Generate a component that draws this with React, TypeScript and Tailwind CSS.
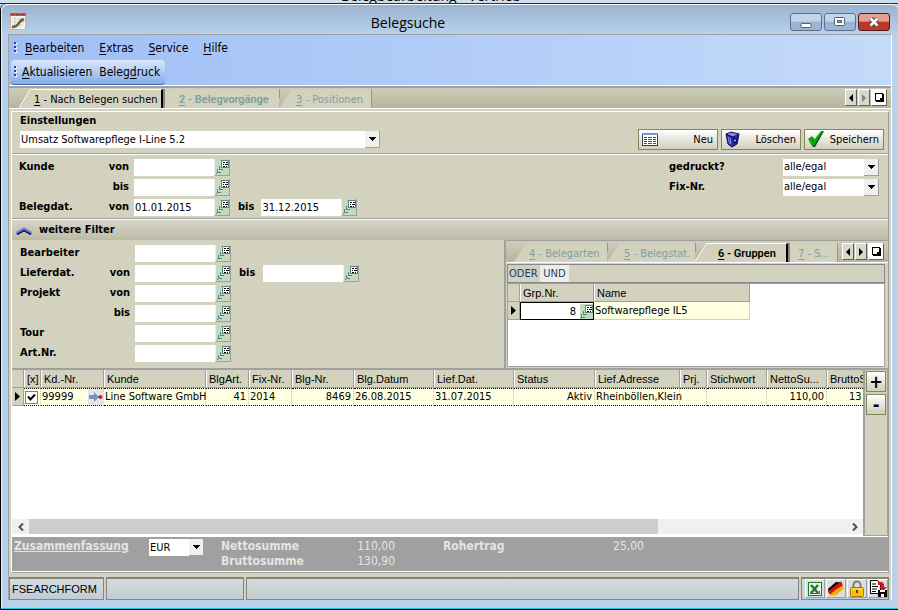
import { useState, type ReactNode } from 'react';
import clsx from 'clsx';

const HEADINGS = [
  { title: '', col: 'w-[12px]' },
  { title: '[x]', col: 'w-[17px]' },
  { title: 'Kd.-Nr.', col: 'w-[63px]' },
  { title: 'Kunde', col: 'w-[102px]' },
  { title: 'BlgArt.', col: 'w-[43px]' },
  { title: 'Fix-Nr.', col: 'w-[43px]' },
  { title: 'Blg-Nr.', col: 'w-[62px]' },
  { title: 'Blg.Datum', col: 'w-[80px]' },
  { title: 'Lief.Dat.', col: 'w-[80px]' },
  { title: 'Status', col: 'w-[81px]' },
  { title: 'Lief.Adresse', col: 'w-[85px]' },
  { title: 'Prj.', col: 'w-[27px]' },
  { title: 'Stichwort', col: 'w-[60px]' },
  { title: 'NettoSu...', col: 'w-[60px]' },
  { title: 'BruttoS', col: 'w-[80px]' },
];

function Hotkey({ children }: { children: string }) {
  return (
    <>
      <span className="underline underline-offset-2">{children[0]}</span>
      {children.slice(1)}
    </>
  );
}

function Grip() {
  return (
    <svg width="4" height="14" className="shrink-0" aria-hidden="true">
      {[1, 5, 9].map(y => (
        <g key={y}>
          <rect x="1" y={y + 1} width="2" height="2" fill="#fff" />
          <rect x="0" y={y} width="2" height="2" fill="#27418f" />
        </g>
      ))}
    </svg>
  );
}

function LookupButton({ label, small }: { label: string; small?: boolean }) {
  return (
    <button
      type="button"
      aria-label={label}
      className={clsx(
        'flex shrink-0 items-center justify-center overflow-hidden bg-[#c0dcc0]',
        small ? 'h-[15px] w-[13px]' : 'h-[17px] w-4 border-r border-b border-l border-r-[#a0a0a0] border-b-[#a0a0a0] border-l-[#eee]'
      )}
    >
      <svg width="13" height="15" className="shrink-0" shapeRendering="crispEdges" aria-hidden="true">
        <rect x="5" y="1" width="8" height="8" fill="#fff" />
        <path d="M5 1h8v1h-8zM5 1h1v8h-1zM5 8h8v1h-8zM12 1h1v8h-1z" fill="#5f8080" />
        <path d="M7 3h2v1h-2zM10 3h2v1h-2zM7 5h1v1h-1zM9 5h3v1h-3zM7 7h2v1h-2zM10 7h1v1h-1z" />
        <path d="M3 7h1v3h3v1h-4zM1 10h1v3h3v1h-4zM0 14h1v1h-1z" fill="#5f8080" />
      </svg>
    </button>
  );
}

function LookupField({ label, value = '' }: { label: string; value?: string }) {
  return (
    <div className="flex">
      <input aria-label={label} defaultValue={value} className="h-[17px] w-20 bg-white px-px outline-none" />
      <LookupButton label={`${label} auswählen`} />
    </div>
  );
}

function DropDown({ label, value, className }: { label: string; value: string; className: string }) {
  return (
    <div className={clsx('relative h-[17px] bg-white text-black', className)}>
      <select aria-label={label} className="h-full w-full appearance-none bg-transparent px-px outline-none">
        <option>{value}</option>
      </select>
      <span className="pointer-events-none absolute top-0 right-0 flex h-full w-[15px] items-center justify-center border-r border-b border-[#a0a0a0] bg-[#f0f0f0]">
        <svg width="7" height="4" shapeRendering="crispEdges" aria-hidden="true">
          <path d="M0 0h7v1h-1v1h-1v1h-1v1h-1v-1h-1v-1h-1v-1h-1z" />
        </svg>
      </span>
    </div>
  );
}

function FilterRow({ title, prefix = '', children }: { title: string; prefix?: string; children: ReactNode }) {
  return (
    <div className="flex h-5 items-center">
      <span className="w-[78px] font-bold">{title}</span>
      <span className="w-8 text-right font-bold">{prefix}</span>
      <div className="ml-[5px] flex items-center">{children}</div>
    </div>
  );
}

// slanted left edge of a tab
function Slant({ active }: { active?: boolean }) {
  return (
    <svg width="13" height="19" className="shrink-0" aria-hidden="true">
      <path d="M0 19L13 0V19z" fill="#d2d2bf" />
      {active && <path d="M0 18.500L11.500 .5H13" fill="none" stroke="#fff" />}
    </svg>
  );
}

function Notch() {
  return <span className="-mr-px h-[9px] w-px shrink-0 self-start bg-[#7f9f9f]" />;
}

function Tab({ children, className }: { children: ReactNode; className: string }) {
  return (
    <button type="button" className={clsx('h-[19px] shrink-0 bg-[#d2d2bf] pt-0.5 text-left whitespace-nowrap', className)}>
      {children}
    </button>
  );
}

function TabScroller({ rightDisabled }: { rightDisabled?: boolean }) {
  const box = 'flex h-[17px] items-center justify-center border border-t-white border-l-white border-r-[#606060] border-b-[#606060]';
  return (
    <div className="ml-auto flex shrink-0 gap-px self-start">
      <button type="button" aria-label="Zurück" className={clsx(box, 'w-[12px] bg-[#d8d8cc]')}>
        <svg width="4" height="8"><path d="M4 0v8L0 4z" /></svg>
      </button>
      <button type="button" aria-label="Weiter" className={clsx(box, 'w-[12px] bg-[#d8d8cc]')}>
        <svg width="4" height="8"><path d="M0 0v8L4 4z" fill={rightDisabled ? '#808080' : '#000'} /></svg>
      </button>
      <button type="button" aria-label="Liste" className={clsx(box, 'w-4 bg-white')}>
        <svg width="9" height="9" shapeRendering="crispEdges">
          <path d="M0 0h8v8h-8z" />
          <path d="M1 1h6v6h-6z" fill="#fff" />
          <path d="M8 1h1v8h-8v-1h7zM5 5h2v2h-2z" />
        </svg>
      </button>
    </div>
  );
}

function ActionButton({ children, icon }: { children: ReactNode; icon: ReactNode }) {
  return (
    <button
      type="button"
      className="flex h-[21px] w-20 items-center justify-between border border-[#85855a] bg-linear-to-b from-white to-[#cfcfbc] pr-1 pl-[3px]"
    >
      {icon}
      {children}
    </button>
  );
}

function HeadCell({ children, first }: { children?: ReactNode; first?: boolean }) {
  return (
    <th
      scope="col"
      className={clsx(
        'h-[18px] overflow-hidden border-r border-b border-[#a0a0a0] bg-[#d2d2bf] pl-0.5 text-left font-["Liberation_Sans",sans-serif] text-[11px] leading-4 font-normal whitespace-nowrap',
        !first && 'border-l border-l-white'
      )}
    >
      {children}
    </th>
  );
}

function Cell({ children, right }: { children?: ReactNode; right?: boolean }) {
  return (
    <td
      className={clsx(
        'h-[18px] border-y border-r border-dotted border-y-black border-r-[#c0c0b0] bg-[#ffffe1] py-0 pl-px leading-4 whitespace-nowrap',
        right ? 'pr-0.5 text-right' : 'pr-0'
      )}
    >
      {children}
    </td>
  );
}

function RowMarker() {
  return (
    <td className="h-[18px] border-r border-b border-[#a0a0a0] bg-[#d2d2bf] pl-[3px]">
      <svg width="6" height="9" className="block"><path d="M0 0v9L5 4.500z" /></svg>
    </td>
  );
}

function TitleBar() {
  const btn = 'flex h-[18px] w-8 items-center justify-center rounded-[3px] border';
  const blue = 'border-[#586f8e] bg-linear-to-b from-[#c3d5ea] from-45% to-[#9cb5d2] to-50%';
  return (
    <header className="flex h-[30px] items-start rounded-t-md border-t border-white bg-linear-to-b from-[#9ab3cf] to-[#b9d1ea] pr-2 pl-2">
      <svg width="16" height="17" className="mt-2" aria-hidden="true">
        <rect x=".5" y="2.500" width="15" height="14" fill="#f7f5ee" stroke="#c9b8a8" />
        <path d="M0 0h16v3H0z" fill="#d8503a" />
        <path d="M2 1.500h2M6 1.500h3M11 1.500h3" stroke="#8f2d20" />
        <path d="M2 6h12M2 9h12M2 12h12M5 4v11M10 4v11" stroke="#d5d0c0" />
        <path d="M2 14c4 0 5-1 7-4s3-3 5-4" fill="none" stroke="#5e5c45" strokeWidth="2.500" />
        <path d="M4 15c4-1 5-3 6-5l4-2" fill="none" stroke="#c9a85a" />
      </svg>
      <h1 className="flex-1 pt-1 text-center font-['Open_Sans',sans-serif] text-sm leading-7 text-black">Belegsuche</h1>
      <div className="mt-2 flex gap-0.5">
        <button type="button" aria-label="Minimieren" className={clsx(btn, blue)}>
          <svg width="12" height="12"><rect x="1" y="7.500" width="10" height="4" rx="1" fill="#fff" stroke="#53606f" /></svg>
        </button>
        <button type="button" aria-label="Maximieren" className={clsx(btn, blue)}>
          <svg width="12" height="10">
            <rect x=".5" y=".5" width="10" height="8" rx="1" fill="#fff" stroke="#53606f" />
            <rect x="3.500" y="3.500" width="4" height="2" fill="#8fb0d4" stroke="#53606f" />
          </svg>
        </button>
        <button
          type="button"
          aria-label="Schließen"
          className={clsx(btn, 'border-[#4f1822] bg-linear-to-b from-[#e5a092] from-45% to-[#b93a26] to-50%')}
        >
          <svg width="12" height="10">
            <path d="M2.500 1.500l7 7M9.500 1.500l-7 7" stroke="#5b4048" strokeWidth="4.500" />
            <path d="M2.500 1.500l7 7M9.500 1.500l-7 7" stroke="#fff" strokeWidth="2.500" />
          </svg>
        </button>
      </div>
    </header>
  );
}

function GroupPanel() {
  return (
    <div className="flex min-w-0 flex-1 flex-col border-t border-l-2 border-[#a0a0a0]">
      <div className="flex h-[22px] items-end border-b border-white bg-linear-to-b from-[#cdcdba] to-[#b6b69c] pt-0.5 pr-1 pl-2 text-[#7f9f9f]">
        <Slant />
        <Tab className="w-[80px] pl-0.5"><Hotkey>4 - Belegarten</Hotkey></Tab>
        <Notch />
        <Slant />
        <Tab className="w-[75px] pl-1"><Hotkey>5 - Belegstat.</Hotkey></Tab>
        <Notch />
        <Slant active />
        <Tab className="w-[80px] border-t border-r-2 border-t-white border-r-black pl-2.5 font-['Roboto',sans-serif] font-semibold text-black"><Hotkey>6 - Gruppen</Hotkey></Tab>
        <Tab className="w-[50px] border-l-2 border-r border-l-[#85858a] border-r-[#7f9f9f] pl-2"><Hotkey>7 - S...</Hotkey></Tab>
        <TabScroller />
      </div>
      <div className="flex flex-1 flex-col bg-[#d2d2bf] p-px pr-[3px]">
        <div className="flex h-[19px] items-center border border-[#85858a] pl-px text-[#1a3a6c]">
          <button type="button" className="w-[31px] text-left">ODER</button>
          <button type="button" className="h-full w-[29px] bg-[#eeeee6]">UND</button>
        </div>
        <div className="flex-1 border border-[#a0a0a0] bg-white">
          <table className="w-[242px] table-fixed border-separate border-spacing-0">
            <colgroup>
              <col className="w-[12px]" />
              <col className="w-[74px]" />
              <col />
            </colgroup>
            <thead>
              <tr>
                <HeadCell first />
                <HeadCell>Grp.Nr.</HeadCell>
                <HeadCell>Name</HeadCell>
              </tr>
            </thead>
            <tbody>
              <tr>
                <RowMarker />
                <td className="h-[18px] border border-black bg-white p-0">
                  <div className="flex">
                    <input aria-label="Grp.Nr." defaultValue="8" className="h-[15px] w-0 flex-1 pr-1 text-right outline-none" />
                    <LookupButton label="Gruppe auswählen" small />
                  </div>
                </td>
                <td className="h-[18px] border-r border-b border-[#d2d2bf] bg-[#ffffe1] py-0 pl-px leading-4">Softwarepflege IL5</td>
              </tr>
            </tbody>
          </table>
        </div>
      </div>
    </div>
  );
}

function DocumentGrid() {
  const [checked, setChecked] = useState(true);
  return (
    <div className="flex min-h-[165px] flex-1 border-t-2 border-[#a0a0a0]">
      <div className="flex w-0 flex-1 flex-col bg-white">
        <div className="flex-1 overflow-hidden">
          <table className="w-[895px] table-fixed border-separate border-spacing-0">
            <colgroup>
              {HEADINGS.map(h => <col key={h.title} className={h.col} />)}
            </colgroup>
            <thead>
              <tr>
                {HEADINGS.map((h, i) => <HeadCell key={h.title} first={i === 0}>{h.title}</HeadCell>)}
              </tr>
            </thead>
            <tbody>
              <tr>
                <RowMarker />
                <Cell>
                  <label className="relative block h-[13px] w-[13px] bg-white">
                    <input
                      type="checkbox"
                      aria-label="Beleg markieren"
                      checked={checked}
                      onChange={e => setChecked(e.target.checked)}
                      className="block h-[13px] w-[13px] appearance-none border border-[#808080]"
                    />
                    {checked && (
                      <svg width="13" height="13" className="pointer-events-none absolute inset-0">
                        <path d="M3 5.500l2.500 3L10 3.500" fill="none" stroke="#000" strokeWidth="2" />
                      </svg>
                    )}
                  </label>
                </Cell>
                <Cell>
                  <div className="flex items-center justify-between">
                    99999
                    <button type="button" aria-label="Kunde öffnen" className="flex h-4 w-[15px] items-center bg-[#e4e4e8]">
                      <svg width="15" height="10">
                        <path d="M1 3h5V0l5 5-5 5V7H1z" fill="#7396bd" />
                        <path d="M10 5h2" stroke="#333" />
                        <circle cx="12.500" cy="5" r="2" fill="#c8281e" />
                      </svg>
                    </button>
                  </div>
                </Cell>
                <Cell>Line Software GmbH</Cell>
                <Cell right>41</Cell>
                <Cell>2014</Cell>
                <Cell right>8469</Cell>
                <Cell>26.08.2015</Cell>
                <Cell>31.07.2015</Cell>
                <Cell right>Aktiv</Cell>
                <Cell>Rheinböllen,Klein</Cell>
                <Cell />
                <Cell />
                <Cell right>110,00</Cell>
                <Cell><span className="pl-[21px]">13</span></Cell>
              </tr>
            </tbody>
          </table>
        </div>
        <div className="mb-0.5 flex h-[15px] bg-[#f0f0f0]">
          <button type="button" aria-label="Nach links" className="flex w-[17px] items-center justify-center">
            <svg width="6" height="8"><path d="M5 .5L1.500 4 5 7.500" fill="none" stroke="#505050" strokeWidth="2" /></svg>
          </button>
          <div className="flex-1"><div className="h-full w-[77%] bg-[#cdcdcd]" /></div>
          <button type="button" aria-label="Nach rechts" className="flex w-[17px] items-center justify-center">
            <svg width="6" height="8"><path d="M1 .5L4.500 4 1 7.500" fill="none" stroke="#505050" strokeWidth="2" /></svg>
          </button>
        </div>
      </div>
      <div className="flex w-[25px] flex-col gap-0.5 border-r border-b border-l-2 border-[#a0a0a0] bg-[#d2d2bf] p-px">
        <button type="button" className="h-[21px] border border-[#85855a] bg-linear-to-b from-white to-[#cfcfbc] text-lg leading-4 font-bold">+</button>
        <button type="button" className="h-[21px] border border-[#85855a] bg-linear-to-b from-white to-[#cfcfbc] text-lg leading-4 font-bold">-</button>
      </div>
    </div>
  );
}

function StatusBar() {
  const panel = 'h-[23px] border border-t-2 border-[#85857c] bg-linear-to-b from-[#d3dde0] to-[#c3ccd0]';
  const icon = 'flex h-[19px] w-5 items-center justify-center border border-t-white border-l-white border-r-[#a0a0a0] border-b-[#a0a0a0] bg-[#d8dfe2]';
  return (
    <footer className="flex gap-0.5 bg-[#d2d2bf] pr-0.5">
      <div className={clsx(panel, 'w-[95px] pl-0.5 font-["Liberation_Sans",sans-serif] leading-5')}>FSEARCHFORM</div>
      <div className={clsx(panel, 'w-[138px]')} />
      <div className={clsx(panel, 'flex-1')} />
      <div className={clsx(panel, 'flex w-[88px] gap-px pl-[3px]')}>
        <button type="button" aria-label="Excel-Export" className={icon}>
          <svg width="14" height="14">
            <rect x=".5" y=".5" width="13" height="13" fill="#e9f5e9" stroke="#178017" />
            <path d="M3 3l7 8M10 3l-7 8" stroke="#2f6f3f" strokeWidth="2.500" />
            <path d="M2 11.500h10M11.500 9v3" stroke="#178017" />
          </svg>
        </button>
        <button type="button" aria-label="Sprache" className={icon}>
          <svg width="16" height="16" className="shrink-0">
            <path d="M0 8L8 1l5 .5L1 12z" fill="#000" />
            <path d="M0 10.500L8 4l5.500-3.500L15 5 8 9l-6 5z" fill="#e01010" />
            <path d="M2 13.500L9 8l6-3.500 1 3L8 14l-5 1z" fill="#f0b000" />
          </svg>
        </button>
        <button type="button" aria-label="Sperren" className={icon}>
          <svg width="14" height="17">
            <path d="M3.500 8V5a3.500 3.500 0 0 1 7 0v3" fill="none" stroke="#808060" strokeWidth="2" />
            <rect x=".5" y="7.500" width="13" height="9" rx="1" fill="#f8c010" stroke="#a87800" />
            <path d="M1 9h12" stroke="#ffe37a" />
            <path d="M7 10v3" stroke="#5f4300" strokeWidth="2" />
          </svg>
        </button>
        <button type="button" aria-label="Speichern und schließen" className={icon}>
          <svg width="17" height="17">
            <path d="M.5.500h7l3 3v10h-10z" fill="#fff" stroke="#000" />
            <path d="M2 4h4M2 6.500h6M2 9h5M2 11.500h4" stroke="#000" />
            <path d="M8 2h4l2 2v3h3l-4 4-4-4h2V5H8z" fill="#e81010" />
            <rect x="8" y="10" width="9" height="7" fill="#000" />
            <path d="M10 10h5v2h-5zM11 14h3v3h-3z" fill="#fff" />
          </svg>
        </button>
      </div>
    </footer>
  );
}

export default function App() {
  return (
    <div className="flex min-h-screen flex-col bg-[#b9d1ea] font-['DejaVu_Sans_Condensed','Noto_Sans',sans-serif] text-[11px] leading-[14px] text-black">
      {/* lower edge of the parent window's caption */}
      <div className="flex h-1 items-end justify-center overflow-hidden border-b border-[#2a3440] bg-[#cfdeee] pr-9 font-['Open_Sans',sans-serif] text-sm leading-[14px]">
        <span>Belegbearbeitung - Vertrieb</span>
      </div>

      <div className="flex flex-1 flex-col rounded-t-md border-b border-l border-black">
        <div className="flex flex-1 flex-col rounded-t-md border-b border-l border-b-[#20c8e8] border-l-[#e8f2fc]">
          <TitleBar />

          <main className="mr-[6px] mb-2 ml-[6px] flex flex-1 flex-col border-t border-r border-l border-t-[#a0a0a0] border-r-white border-l-[#a0a0a0] bg-[#d2d2bf]">
            <div className="border-b border-white bg-linear-to-r from-[#9ebef5] to-[#c4daf9] text-xs">
              <nav className="flex h-[25px] items-center gap-[15px] pl-[5px]">
                <div className="flex items-center gap-[7px]">
                  <Grip />
                  <button type="button"><Hotkey>Bearbeiten</Hotkey></button>
                </div>
                <button type="button"><Hotkey>Extras</Hotkey></button>
                <button type="button"><Hotkey>Service</Hotkey></button>
                <button type="button"><Hotkey>Hilfe</Hotkey></button>
              </nav>
              <div className="ml-0.5 flex h-[25px] w-[154px] items-center gap-[7px] rounded border-b border-[#3f66ad] bg-linear-to-b from-[#dbe8fc] to-[#86abe6] pl-[3px]">
                <div className="flex items-center gap-1">
                  <Grip />
                  <button type="button"><Hotkey>Aktualisieren</Hotkey></button>
                </div>
                <button type="button">Beleg<span className="underline underline-offset-2">d</span>ruck</button>
              </div>
            </div>

            <div className="flex h-[23px] items-end border-t-2 border-b border-t-[#a0a0a0] border-b-white bg-linear-to-b from-[#cdcdba] to-[#b6b69c] pt-px pr-1 pl-[10px] text-[#7f9f9f]">
              <Slant active />
              <Tab className="w-[131px] border-t border-r-2 border-t-white border-r-black pl-0.5 text-black"><Hotkey>1 - Nach Belegen suchen</Hotkey></Tab>
              <Tab className="w-[116px] border-l-2 border-l-[#85858a] pl-3.5 font-['Roboto',sans-serif] font-semibold"><Hotkey>2 - Belegvorgänge</Hotkey></Tab>
              <Notch />
              <Slant />
              <Tab className="w-[80px] border-r border-r-[#7f9f9f] pl-1"><Hotkey>3 - Positionen</Hotkey></Tab>
              <TabScroller rightDisabled />
            </div>

            <div className="mx-0.5 mt-0.5 mb-1 flex flex-1 flex-col border border-t-white border-l-white border-r-[#a0a0a0] border-b-[#a0a0a0]">
              <section className="flex h-[42px] items-end justify-between border-b border-[#a0a0a0] pr-1 pb-[3px] pl-2">
                <div className="pb-0.5">
                  <h2 className="mb-[3px] font-bold">Einstellungen</h2>
                  <DropDown label="Einstellungen" value="Umsatz Softwarepflege I-Line 5.2" className="w-[360px]" />
                </div>
                <div className="flex gap-[3px]">
                  <ActionButton
                    icon={
                      <svg width="16" height="14" shapeRendering="crispEdges">
                        <path d="M0 0h16v13h-16z" fill="#404040" />
                        <path d="M1 2h14v10h-14z" fill="#fff" />
                        <path d="M0 0h16v2h-16z" fill="#5f9fcf" />
                        <path d="M2 4h3v1h-3zM6 4h4v1h-4zM11 4h3v1h-3zM2 6h3v1h-3zM6 6h4v1h-4zM11 6h3v1h-3zM2 8h3v1h-3zM6 8h4v1h-4zM11 8h3v1h-3zM2 10h3v1h-3zM6 10h4v1h-4zM11 10h3v1h-3z" fill="#505050" />
                      </svg>
                    }
                  >
                    Neu
                  </ActionButton>
                  <ActionButton
                    icon={
                      <svg width="17" height="17">
                        <path d="M1 3l6 3 7-3-2 10-5 3-4-3z" fill="#2424a8" stroke="#0c0c50" />
                        <path d="M1 3l5-2 8 2-6 3z" fill="#7f8cf8" stroke="#10105a" />
                        <path d="M3 5.500l1.500 7M5 6.500l1 7" stroke="#8a9aff" />
                        <path d="M8 8l1 5 3-2 1-5z" fill="#14147a" />
                        <path d="M9 10l2-1" stroke="#fff" />
                      </svg>
                    }
                  >
                    Löschen
                  </ActionButton>
                  <ActionButton
                    icon={
                      <svg width="17" height="17">
                        <path d="M1 9l4-3 2 4 7-10h2L7 16H5z" fill="#0a3a50" />
                        <path d="M0 8l4-3 2 4 7-9h2L6 15H4z" fill="#08a808" />
                      </svg>
                    }
                  >
                    Speichern
                  </ActionButton>
                </div>
              </section>

              <section className="flex justify-between border-t border-b border-t-white border-b-[#a0a0a0] pt-0.5 pr-[9px] pb-px pl-[7px]">
                <div>
                  <FilterRow title="Kunde" prefix="von"><LookupField label="Kunde von" /></FilterRow>
                  <FilterRow title="" prefix="bis"><LookupField label="Kunde bis" /></FilterRow>
                  <FilterRow title="Belegdat." prefix="von">
                    <LookupField label="Belegdatum von" value="01.01.2015" />
                    <span className="mr-[7px] ml-2 font-bold">bis</span>
                    <LookupField label="Belegdatum bis" value="31.12.2015" />
                  </FilterRow>
                </div>
                <div>
                  <div className="flex h-5 items-center">
                    <span className="w-[114px] font-bold">gedruckt?</span>
                    <DropDown label="gedruckt?" value="alle/egal" className="w-24" />
                  </div>
                  <div className="flex h-5 items-center">
                    <span className="w-[114px] font-bold">Fix-Nr.</span>
                    <DropDown label="Fix-Nr." value="alle/egal" className="w-24" />
                  </div>
                </div>
              </section>

              <button type="button" className="flex h-[21px] items-center gap-[7px] border-t border-white bg-linear-to-b from-[#d6d6ca] to-[#bcbca6] pl-1 font-bold">
                <svg width="16" height="9" aria-hidden="true">
                  <path d="M0 6l8-5 8 5v2l-8-4-8 4z" fill="#7878f0" />
                  <path d="M1 8.500l7-4 7 4" fill="none" stroke="#101030" strokeWidth="1.500" />
                </svg>
                weitere Filter
              </button>
              <section className="flex">
                <div className="w-[492px] shrink-0 pt-[3px] pb-[5px] pl-2">
                  <FilterRow title="Bearbeiter"><LookupField label="Bearbeiter" /></FilterRow>
                  <FilterRow title="Lieferdat." prefix="von">
                    <LookupField label="Lieferdatum von" />
                    <span className="mr-2 ml-2 font-bold">bis</span>
                    <LookupField label="Lieferdatum bis" />
                  </FilterRow>
                  <FilterRow title="Projekt" prefix="von"><LookupField label="Projekt von" /></FilterRow>
                  <FilterRow title="" prefix="bis"><LookupField label="Projekt bis" /></FilterRow>
                  <FilterRow title="Tour"><LookupField label="Tour" /></FilterRow>
                  <FilterRow title="Art.Nr."><LookupField label="Artikelnummer" /></FilterRow>
                </div>
                <GroupPanel />
              </section>

              <DocumentGrid />

              <section className="flex h-9 border-y border-white bg-[#a0a0a0] pt-0.5 pl-0.5 text-xs leading-[15px] text-[#e4e4e4]">
                <h2 className="w-[135px] font-bold underline">Zusammenfassung</h2>
                <DropDown label="Währung" value="EUR" className="w-[55px] text-[11px]" />
                <dl className="ml-[17px] grid grid-cols-[120px_54px] content-start">
                  <dt className="font-bold">Nettosumme</dt>
                  <dd className="text-right">110,00</dd>
                  <dt className="font-bold">Bruttosumme</dt>
                  <dd className="text-right">130,90</dd>
                </dl>
                <dl className="ml-12 grid grid-cols-[120px_81px] content-start">
                  <dt className="font-bold">Rohertrag</dt>
                  <dd className="text-right">25,00</dd>
                </dl>
              </section>
            </div>

            <StatusBar />
          </main>
        </div>
      </div>
    </div>
  );
}
